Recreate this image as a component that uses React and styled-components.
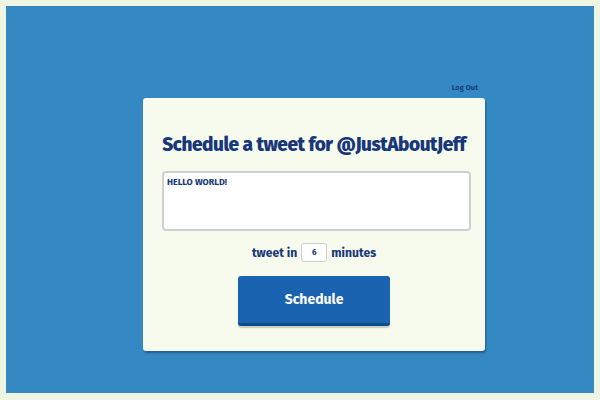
import React, { useState } from 'react';
import styled, { createGlobalStyle } from 'styled-components';

const GlobalStyle = createGlobalStyle`
  html, body {
    margin: 0;
    padding: 0;
    background: #eef6e3;
    font-family: "Fira Sans", "Noto Sans", "Open Sans", sans-serif;
  }
`;

const Frame = styled.div`
  width: 600px;
  height: 400px;
  box-sizing: border-box;
  padding: 6px 6px 7px 6px;
  background: #eef6e3;
`;

const Stage = styled.div`
  height: 100%;
  background: #3589c3;
  display: flex;
  justify-content: center;
  padding-top: 76px;
  padding-left: 28px;
  box-sizing: border-box;
`;

const Column = styled.div`
  width: 342px;
  display: flex;
  flex-direction: column;
`;

const LogOut = styled.a`
  align-self: flex-end;
  margin-right: 7px;
  font-size: 7.5px;
  font-weight: 600;
  color: #17377a;
  line-height: 12px;
  text-decoration: none;
  cursor: pointer;
`;

const Card = styled.div`
  margin-top: 4px;
  height: 253px;
  box-sizing: border-box;
  background: #f7fbee;
  border-radius: 3px;
  box-shadow: 1px 2px 2px rgba(20, 60, 110, 0.55);
  padding: 35px 14px 0 19px;
  display: flex;
  flex-direction: column;
`;

const Title = styled.h1`
  margin: 0;
  font-size: 19px;
  font-weight: 800;
  color: #17377a;
  letter-spacing: -0.45px;
  text-align: center;
  white-space: nowrap;
  padding-right: 5px;
  line-height: 24px;
`;

const Message = styled.textarea`
  margin-top: 14px;
  width: 309px;
  height: 60px;
  box-sizing: border-box;
  border: 2px solid #cdd0d0;
  border-radius: 4px;
  background: #fff;
  padding: 4px 3px;
  resize: none;
  font-family: inherit;
  font-size: 9px;
  font-weight: 700;
  color: #17377a;
  outline: none;
`;

const Row = styled.div`
  margin-top: 12px;
  display: flex;
  align-items: center;
  justify-content: center;
  gap: 4px;
  padding-right: 5px;
  font-size: 12.2px;
  font-weight: 700;
  color: #17377a;
`;

const Minutes = styled.input`
  width: 26px;
  height: 19px;
  box-sizing: border-box;
  border: 1.5px solid #cdd0d0;
  border-radius: 3px;
  background: #fff;
  text-align: center;
  font-family: inherit;
  font-size: 8px;
  font-weight: 700;
  color: #17377a;
  padding: 0;
  outline: none;
`;

const Button = styled.button`
  align-self: center;
  margin-top: 14px;
  margin-right: 5px;
  width: 152px;
  height: 50px;
  box-sizing: border-box;
  border: none;
  border-bottom: 3px solid #0d4a8c;
  border-radius: 3px;
  background: #1a63b0;
  box-shadow: 0 2px 1px rgba(180, 190, 170, 0.7);
  color: #fff;
  font-family: inherit;
  font-size: 14px;
  font-weight: 700;
  cursor: pointer;
`;

export default function App() {
  const [text, setText] = useState('HELLO WORLD!');
  const [mins, setMins] = useState('6');

  return (
    <>
      <GlobalStyle />
      <Frame>
        <Stage>
          <Column>
            <LogOut>Log Out</LogOut>
            <Card>
              <Title>Schedule a tweet for @JustAboutJeff</Title>
              <Message value={text} onChange={e => setText(e.target.value)} />
              <Row>
                tweet in
                <Minutes value={mins} onChange={e => setMins(e.target.value)} />
                minutes
              </Row>
              <Button>Schedule</Button>
            </Card>
          </Column>
        </Stage>
      </Frame>
    </>
  );
}
